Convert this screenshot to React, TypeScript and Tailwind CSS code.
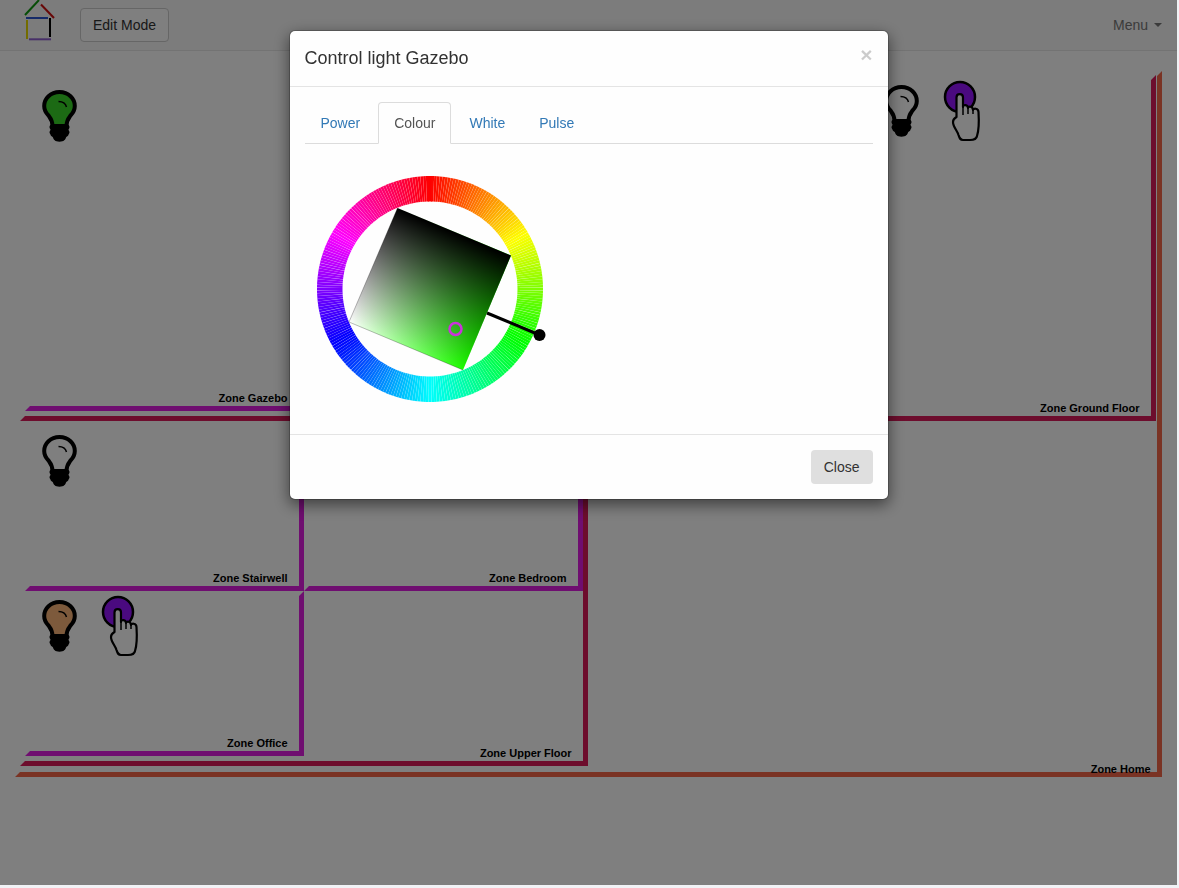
import React from "react";

const ZONES = [
  { color: "#de1de0", points: "30,406 299,406 299,85 304,80 304,411 25,411" },
  { color: "#da1a5a", points: "25,416 1151,416 1151,80 1156,75 1156,421 20,421" },
  { color: "#de1de0", points: "30,586 299,586 299,431 304,426 304,591 25,591" },
  { color: "#de1de0", points: "309,586 578,586 578,431 583,426 583,591 304,591" },
  { color: "#de1de0", points: "30,751 299,751 299,596 304,591 304,756 25,756" },
  { color: "#da1a5a", points: "25,761 583,761 583,431 588,426 588,766 20,766" },
  { color: "#f46648", points: "20,772 1157,772 1157,76 1162,71 1162,777 15,777" },
];

const LABELS = [
  { text: "Zone Gazebo", x: 287.6, y: 402 },
  { text: "Zone Ground Floor", x: 1139.6, y: 412 },
  { text: "Zone Stairwell", x: 287.6, y: 582 },
  { text: "Zone Bedroom", x: 566.6, y: 582 },
  { text: "Zone Office", x: 287.6, y: 747 },
  { text: "Zone Upper Floor", x: 571.6, y: 757 },
  { text: "Zone Home", x: 1150.6, y: 773 },
];

function Bulb({ x, y, fill = "none" }: { x: number; y: number; fill?: string }) {
  return (
    <g transform={`translate(${x} ${y})`}>
      <path
        d="M17.5 2C8.5 2 2.2 8.5 2.2 16C2.2 20 4 23 6.5 25.5C8 27.5 10.5 30 10.5 36H24.5C24.5 30 27 27.5 28.5 25.5C31 23 32.8 20 32.8 16C32.8 8.5 26.5 2 17.5 2Z"
        fill={fill}
        stroke="#000"
        strokeWidth="4"
      />
      <path d="M16.5 11.5C20 11.5 23.5 13 24.5 17" fill="none" stroke="#000" strokeWidth="1.5" />
      <path
        d="M10 34.5H25C26.5 34.5 27.5 35.5 27.5 37C27.5 38.5 26.5 39 26.5 39.7C26.5 40.4 27.5 41 27.5 42.3C27.5 43.6 26.5 44 26.5 44.7C26.5 45.7 24.5 46.5 24 47.5C23.5 49.5 22 51.7 17.5 51.7C13 51.7 11.5 49.5 11 47.5C10.5 46.5 8.5 45.7 8.5 44.7C8.5 44 7.5 43.6 7.5 42.3C7.5 41 8.5 40.4 8.5 39.7C8.5 39 7.5 38.5 7.5 37C7.5 35.5 8.5 34.5 10 34.5Z"
        fill="#000"
      />
    </g>
  );
}

function Switch({ x, y }: { x: number; y: number }) {
  return (
    <g transform={`translate(${x - 100} ${y - 594})`}>
      <circle cx="118" cy="612" r="15" fill="#9514ff" stroke="#000" strokeWidth="2.5" />
      <path
        d="M114.5 632V612.5C114.5 608 121 608 121 612.5V622C121 619 126 619.5 126 623C126 621 131 621 131 625C131 623 136.5 623 136.5 627C137 635 137 645 135 651C134.5 654 132 655 128 655H121C118 655 117.5 653 116.5 650C115.5 646 111 642 111 637C111 634 113 633 114.5 632Z"
        fill="#fff"
        stroke="#000"
        strokeWidth="2.2"
        strokeLinejoin="round"
      />
      <path d="M121 622V630M126 623V629M131 625V629" fill="none" stroke="#000" strokeWidth="1.5" />
    </g>
  );
}

function Logo() {
  return (
    <svg className="absolute left-0 top-0" width="70" height="50" viewBox="0 0 70 50">
      <path d="M25 15L39 0" stroke="#0e9a0e" strokeWidth="2" />
      <path d="M41 4.5L54 18" stroke="#d01010" strokeWidth="2" />
      <path d="M26 18H48" stroke="#2a55d0" strokeWidth="2" />
      <path d="M27 20V39" stroke="#e6d800" strokeWidth="2" />
      <path d="M50 18V37" stroke="#000" strokeWidth="2" />
      <path d="M29 39.3H51" stroke="#9060d0" strokeWidth="2" />
    </svg>
  );
}

function ColourWheel() {
  const cx = 125;
  const cy = 125;
  const outer = 113;
  const inner = 87.5;
  const count = 256;
  const step = 360 / count;
  const wedges = Array.from({ length: count }, (_, i) => {
    const hue = i * step;
    // wedges stop just short of each other so pale seams show through, as in the original canvas
    const half = i === 0 ? step : step * 0.485;
    const a0 = ((hue - 90 - half) * Math.PI) / 180;
    const a1 = ((hue - 90 + half) * Math.PI) / 180;
    const pts = [
      [cx + outer * Math.cos(a0), cy + outer * Math.sin(a0)],
      [cx + outer * Math.cos(a1), cy + outer * Math.sin(a1)],
      [cx + inner * Math.cos(a1), cy + inner * Math.sin(a1)],
      [cx + inner * Math.cos(a0), cy + inner * Math.sin(a0)],
    ];
    return { hue, points: pts.map((p) => p.map((n) => n.toFixed(2)).join(",")).join(" ") };
  });
  const square = "92.5,44 206,91.5 158,206 44,158";

  return (
    <svg className="block" width="250" height="250" viewBox="0 0 250 250">
      <defs>
        <linearGradient id="sat" gradientUnits="userSpaceOnUse" x1="44" y1="158" x2="158" y2="206">
          <stop offset="0" stopColor="#fff" />
          <stop offset="1" stopColor="hsl(113 100% 50%)" />
        </linearGradient>
        <linearGradient id="val" gradientUnits="userSpaceOnUse" x1="44" y1="158" x2="92.5" y2="44">
          <stop offset="0" stopColor="#000" stopOpacity="0" />
          <stop offset="1" stopColor="#000" stopOpacity="1" />
        </linearGradient>
      </defs>
      {wedges.map((w) => (
        <polygon key={w.hue} points={w.points} fill={`hsl(${w.hue} 100% 50%)`} />
      ))}
      <polygon points={square} fill="url(#sat)" />
      <polygon points={square} fill="url(#val)" />
      <path d="M92.5 44L44 158L158 206" fill="none" stroke="#000" strokeOpacity="0.45" strokeWidth="0.6" />
      <line x1="182" y1="149" x2="234.5" y2="171" stroke="#000" strokeWidth="3" />
      <circle cx="234.5" cy="171" r="6" fill="#000" />
      <circle cx="150.5" cy="165" r="6" fill="none" stroke="#cc33dd" strokeWidth="2.5" />
    </svg>
  );
}

export default function App() {
  const tabs = ["Power", "Colour", "White", "Pulse"];

  return (
    <div className="h-[888px] w-[1179px] overflow-hidden bg-[#f1f2f5] font-['Liberation_Sans',Arial,sans-serif] text-sm text-[#333]">
      <div className="relative h-[885px] w-[1177px] bg-white">
        {/* Navbar */}
        <nav className="relative flex h-[51px] items-center justify-between border-b border-[#e7e7e7] bg-[#f8f8f8] pl-20 pr-[15px]">
          <Logo />
          <button className="h-[34px] rounded border border-[#ccc] bg-white px-3 text-sm text-[#333]">
            <span className="opacity-[0.999]">Edit Mode</span>
          </button>
          <div className="flex items-center gap-1.5 text-[#777]">
            <span className="opacity-[0.999]">Menu</span>
            <span className="h-0 w-0 border-x-4 border-t-4 border-x-transparent border-t-[#777]" />
          </div>
        </nav>

        {/* Zones diagram */}
        <div className="relative h-[834px]">
          <svg className="block" width="1177" height="834" viewBox="0 51 1177 834">
            {ZONES.map((z) => (
              <polygon key={z.points} points={z.points} fill={z.color} />
            ))}
            <Bulb x={42} y={90} fill="#38d428" />
            <Bulb x={42} y={435} />
            <Bulb x={42} y={600} fill="#fab478" />
            <Bulb x={884} y={85} />
            <Switch x={100} y={594} />
            <Switch x={942} y={79} />
          </svg>
          <svg className="absolute left-0 top-0 opacity-[0.999]" width="1177" height="834" viewBox="0 51 1177 834">
            {LABELS.map((l) => (
              <text key={l.text} x={l.x} y={l.y} textAnchor="end" className="fill-black text-[11px] font-bold">
                {l.text}
              </text>
            ))}
          </svg>
        </div>

        {/* Modal */}
        <div className="absolute inset-0 bg-black/50">
          <div className="ml-[288.5px] mt-[30px] w-[600px] rounded-md border border-black/20 bg-white bg-clip-padding opacity-[0.999] shadow-[0_5px_15px_rgba(0,0,0,0.5)]">
            <div className="relative border-b border-[#e5e5e5] p-[15px]">
              <h4 className="text-lg leading-[25px] text-[#333]">Control light Gazebo</h4>
              <span className="absolute right-[15px] top-[9px] text-[21px] font-bold leading-[30px] text-black/20">×</span>
            </div>
            <div className="p-[15px]">
              <ul className="flex h-[42px] border-b border-[#ddd]">
                {tabs.map((t) => (
                  <li
                    key={t}
                    className={
                      t === "Colour"
                        ? "mr-0.5 h-[42px] rounded-t border border-[#ddd] border-b-white bg-white px-[15px] py-2.5 leading-5 text-[#555]"
                        : "mr-0.5 h-[41px] border border-transparent px-[15px] py-2.5 leading-5 text-[#337ab7]"
                    }
                  >
                    {t}
                  </li>
                ))}
              </ul>
              <div className="h-[275px] pt-5">
                <ColourWheel />
              </div>
            </div>
            <div className="flex justify-end border-t border-[#e5e5e5] p-[15px]">
              <button className="h-[34px] rounded bg-[#e0e0e0] px-[13px] text-sm text-[#333]">Close</button>
            </div>
          </div>
        </div>
      </div>
    </div>
  );
}
